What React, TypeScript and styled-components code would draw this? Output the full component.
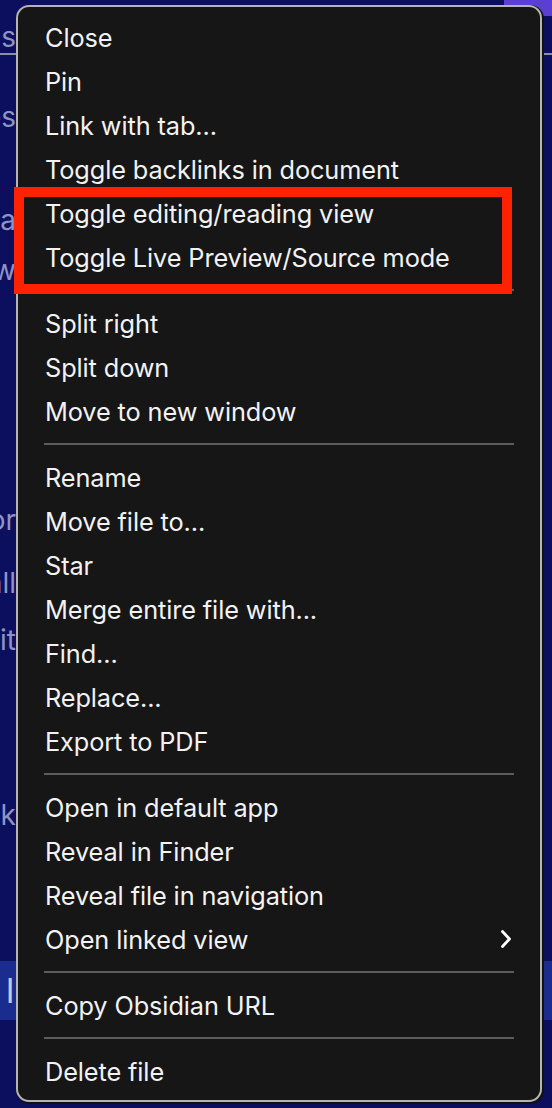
import React from 'react';
import styled, { createGlobalStyle } from 'styled-components';

const GlobalStyle = createGlobalStyle`
  html, body {
    margin: 0;
    padding: 0;
    background: #0b0f5e;
  }
  body {
    font-family: Inter, "Noto Sans", "Liberation Sans", sans-serif;
    -webkit-font-smoothing: antialiased;
  }
`;

type Entry = { label: string; submenu?: boolean } | 'sep';

const entries: Entry[] = [
  { label: 'Close' },
  { label: 'Pin' },
  { label: 'Link with tab...' },
  { label: 'Toggle backlinks in document' },
  { label: 'Toggle editing/reading view' },
  { label: 'Toggle Live Preview/Source mode' },
  'sep',
  { label: 'Split right' },
  { label: 'Split down' },
  { label: 'Move to new window' },
  'sep',
  { label: 'Rename' },
  { label: 'Move file to...' },
  { label: 'Star' },
  { label: 'Merge entire file with...' },
  { label: 'Find...' },
  { label: 'Replace...' },
  { label: 'Export to PDF' },
  'sep',
  { label: 'Open in default app' },
  { label: 'Reveal in Finder' },
  { label: 'Reveal file in navigation' },
  { label: 'Open linked view', submenu: true },
  'sep',
  { label: 'Copy Obsidian URL' },
  'sep',
  { label: 'Delete file' },
];

// editor text that peeks out to the left of the menu; gap = space above the line
const lines: { text: string; gap: number }[] = [
  { text: 'notes', gap: 45 },
  { text: 'idea', gap: 69 },
  { text: 'preview', gap: 16 },
  { text: 'for', gap: 216 },
  { text: 'all', gap: 29 },
  { text: 'it', gap: 23 },
  { text: 'track', gap: 141 },
];

const Page = styled.div`
  position: relative;
  width: 552px;
  height: 1108px;
  overflow: hidden;
  background: #0b0f5e;
`;

const Editor = styled.div`
  display: flex;
  flex-direction: column;
  height: 100%;
`;

const TabBar = styled.div`
  height: 16px;
  display: flex;
  justify-content: flex-end;
`;

const ActiveTab = styled.div`
  width: 48px;
  background: #5b3fd4;
`;

const Title = styled.div`
  margin-top: 4px;
  display: flex;
  flex-direction: column;
`;

const Line = styled.div<{ $gap?: number }>`
  margin-top: ${(p) => p.$gap ?? 0}px;
  width: 16px;
  display: flex;
  justify-content: flex-end;
  overflow: hidden;
  white-space: nowrap;
  color: #8f93c4;
  font-size: 28px;
  line-height: 34px;
`;

const Rule = styled.div`
  margin-top: -1px;
  height: 2px;
  background: #8a8db0;
`;

const ActiveRow = styled.div`
  margin-top: 129px;
  height: 59px;
  background: #1b2c8f;
  color: #c9cbe0;
  font-size: 34px;
  line-height: 59px;
  padding-left: 6px;
`;

const Menu = styled.div`
  position: absolute;
  top: 5px;
  left: 16px;
  width: 526px;
  box-sizing: border-box;
  padding: 8px 0 7px;
  background: #161616;
  border: 2px solid #b4b4b4;
  border-radius: 13px;
  box-shadow: 1px 1px 0 1px #111;
`;

const Item = styled.div`
  height: 44px;
  display: flex;
  align-items: center;
  justify-content: space-between;
  padding: 0 28px 0 27px;
  color: #f2f2f2;
  font-size: 25.3px;
  letter-spacing: -0.1px;
  white-space: nowrap;
`;

const Separator = styled.div`
  height: 22px;
  display: flex;
  align-items: center;
  padding: 0 26px;

  &::after {
    content: '';
    flex: 1;
    height: 2px;
    background: #5c5c5c;
  }
`;

const Chevron = () => (
  <svg width="12" height="20" viewBox="0 0 12 20" fill="none">
    <path d="M2.5 2.5 L9.5 10 L2.5 17.5" stroke="#fff" strokeWidth="2.8" strokeLinecap="round" strokeLinejoin="round" />
  </svg>
);

const Highlight = styled.div`
  position: absolute;
  top: 187px;
  left: 14px;
  width: 498px;
  height: 107px;
  box-sizing: border-box;
  border: 10px solid #ff2200;
  pointer-events: none;
`;

export default function App() {
  return (
    <>
      <GlobalStyle />
      <Page>
        <Editor>
          <TabBar>
            <ActiveTab />
          </TabBar>
          <Title>
            <Line>focus</Line>
            <Rule />
          </Title>
          {lines.map((l, i) => (
            <Line key={i} $gap={l.gap}>{l.text}</Line>
          ))}
          <ActiveRow>l</ActiveRow>
        </Editor>
        <Menu>
          {entries.map((e, i) =>
            e === 'sep' ? (
              <Separator key={i} />
            ) : (
              <Item key={i}>
                <span>{e.label}</span>
                {e.submenu && <Chevron />}
              </Item>
            )
          )}
        </Menu>
        <Highlight />
      </Page>
    </>
  );
}
